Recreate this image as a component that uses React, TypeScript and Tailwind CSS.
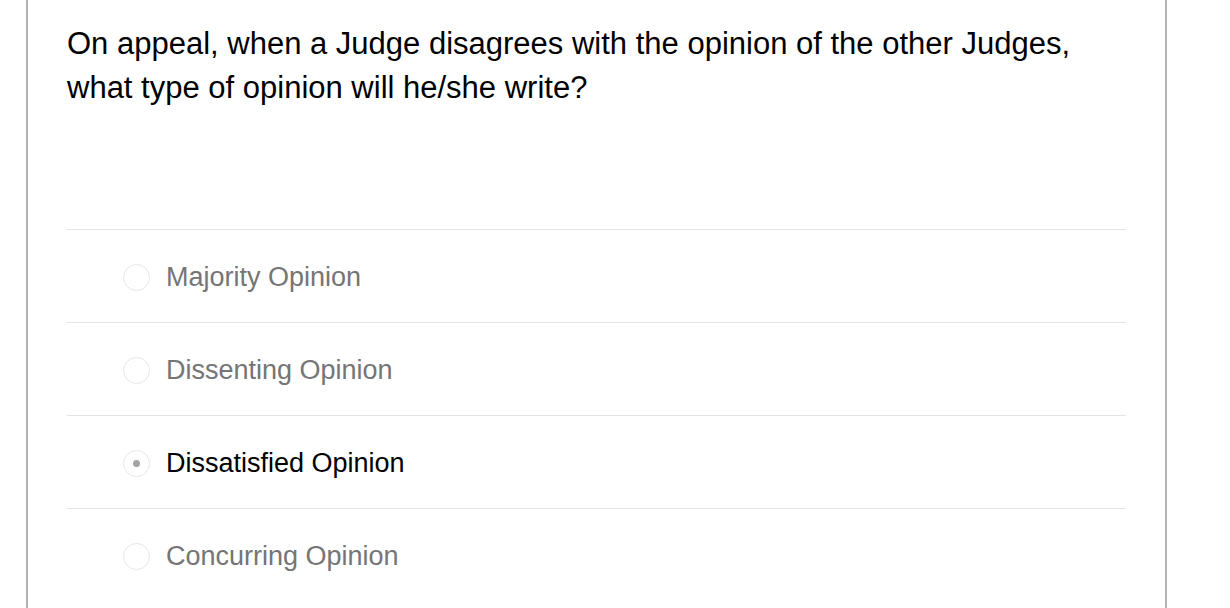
import { useState } from "react";

const options = [
  "Majority Opinion",
  "Dissenting Opinion",
  "Dissatisfied Opinion",
  "Concurring Opinion",
];

export default function App() {
  const [selected, setSelected] = useState(2);

  return (
    <div className="h-[608px] w-[1230px] overflow-hidden bg-white font-['Liberation_Sans',Arial,sans-serif]">
      <div className="ml-[26px] h-full w-[1141px] border-x-2 border-[#b3b3b3] px-[39px] pt-[22px]">
        <p className="text-[31px] leading-[44px] text-black">
          On appeal, when a Judge disagrees with the opinion of the other Judges,
          <br />
          what type of opinion will he/she write?
        </p>
        <div className="mt-[119px]">
          {options.map((label, i) => (
            <button
              key={label}
              onClick={() => setSelected(i)}
              className="flex h-[93px] w-full items-center border-t border-[#e4e4e4] pl-[56px] pt-[3px] text-left"
            >
              <span className="flex h-[27px] w-[27px] items-center justify-center rounded-full border border-[#e6e6e6] bg-white">
                {selected === i && <span className="h-[7px] w-[7px] rounded-full bg-[#a3a3a3]" />}
              </span>
              <span
                className={
                  "ml-[16px] text-[27px] " + (selected === i ? "text-black" : "text-[#757575]")
                }
              >
                {label}
              </span>
            </button>
          ))}
        </div>
      </div>
    </div>
  );
}
